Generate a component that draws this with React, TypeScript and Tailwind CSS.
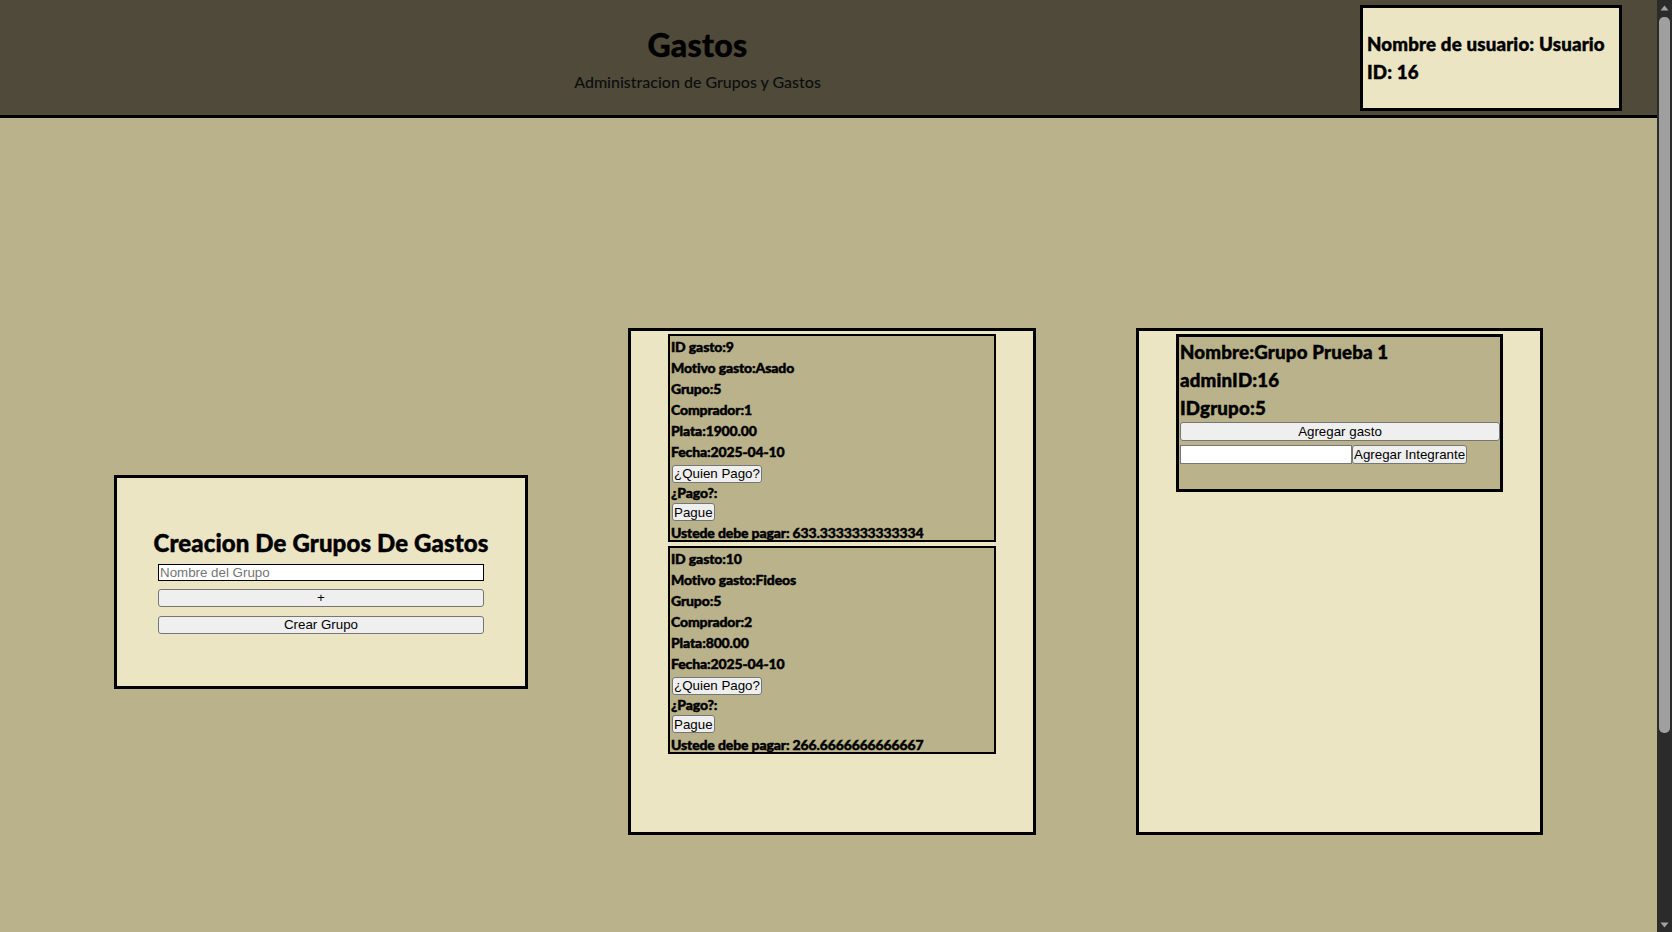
import React from "react";

const font = "font-['Lato','Noto_Sans',sans-serif]";
const heavy = "font-black [-webkit-text-stroke:0.45px_black]";
const btn =
  "font-['Liberation_Sans',Arial,sans-serif] font-normal tracking-normal [-webkit-text-stroke:0px] text-[13.33px] leading-[15px] text-black bg-[#efefef] border border-[#767676] rounded-[3px] px-[1px] flex items-center justify-center whitespace-nowrap";

type Gasto = {
  id: number;
  motivo: string;
  grupo: number;
  comprador: number;
  plata: string;
  fecha: string;
  debe: string;
};

const gastos: Gasto[] = [
  { id: 9, motivo: "Asado", grupo: 5, comprador: 1, plata: "1900.00", fecha: "2025-04-10", debe: "633.3333333333334" },
  { id: 10, motivo: "Fideos", grupo: 5, comprador: 2, plata: "800.00", fecha: "2025-04-10", debe: "266.6666666666667" },
];

function GastoCard({ g }: { g: Gasto }) {
  return (
    <div className={`w-[328px] h-[208px] shrink-0 border-2 border-black bg-[#b9b28b] flex flex-col text-[14px] leading-[21px] ${heavy} tracking-[-0.01em] text-black`}>
      <div className="pl-[1px] h-[21px] shrink-0">ID gasto:{g.id}</div>
      <div className="pl-[1px] h-[21px] shrink-0">Motivo gasto:{g.motivo}</div>
      <div className="pl-[1px] h-[21px] shrink-0">Grupo:{g.grupo}</div>
      <div className="pl-[1px] h-[21px] shrink-0">Comprador:{g.comprador}</div>
      <div className="pl-[1px] h-[21px] shrink-0">Plata:{g.plata}</div>
      <div className="pl-[1px] h-[21px] shrink-0">Fecha:{g.fecha}</div>
      <div className="flex h-[20px] shrink-0">
        <button className={`${btn} h-[18px] ml-[2px] mt-[2.5px]`}>¿Quien Pago?</button>
      </div>
      <div className="pl-[1px] h-[21px] shrink-0">¿Pago?:</div>
      <div className="flex h-[18.5px] shrink-0">
        <button className={`${btn} h-[18px] ml-[2px]`}>Pague</button>
      </div>
      <div className="pl-[1px] h-[21px] shrink-0 whitespace-nowrap">Ustede debe pagar: {g.debe}</div>
    </div>
  );
}

function Scrollbar() {
  return (
    <div className="w-[15px] h-full bg-[#2b2b2b] flex flex-col items-center shrink-0">
      <div className="h-[15px] w-full flex items-center justify-center">
        <svg width="9" height="6" viewBox="0 0 9 6">
          <path d="M4.5 0.5 L8.5 5.5 L0.5 5.5 Z" fill="#a3a3a3" />
        </svg>
      </div>
      <div className="flex-1 w-full px-[2px] pt-[2px]">
        <div className="h-[716px] w-full rounded-[5px] bg-[#9f9f9f]" />
      </div>
      <div className="h-[15px] w-full flex items-center justify-center">
        <svg width="9" height="6" viewBox="0 0 9 6">
          <path d="M0.5 0.5 L8.5 0.5 L4.5 5.5 Z" fill="#a3a3a3" />
        </svg>
      </div>
    </div>
  );
}

export default function App() {
  return (
    <div className="h-screen flex overflow-hidden bg-[#b9b28b]">
      <div className={`flex-1 h-full overflow-hidden ${font} text-black bg-[#b9b28b]`}>
        <div className="min-h-[1174px]">
          {/* Header */}
          <header className="h-[118px] bg-[#4f4a39] border-b-[3px] border-black flex items-center px-[35px]">
            <div className="flex-1 flex flex-col items-center">
              <h1 className={`text-[32px] leading-[48px] ${heavy} tracking-[0.01em] text-black`}>Gastos</h1>
              <p className="text-[16px] leading-[24px] mt-[1px] font-medium text-[#0d0d0d]">Administracion de Grupos y Gastos</p>
            </div>
            <div className={`w-[262px] h-[106px] border-[3px] border-black bg-[#ebe5c4] flex flex-col justify-center pl-[4px] ${heavy} tracking-[0.01em]`}>
              <h3 className="text-[18.72px] leading-[28px] whitespace-nowrap">Nombre de usuario: Usuario</h3>
              <h3 className="text-[18.72px] leading-[28px]">ID: 16</h3>
            </div>
          </header>

          {/* Main */}
          <main className="flex justify-center items-center gap-[100px] pt-[210px] pb-[339px]">
            {/* Create group */}
            <div className="w-[414px] h-[214px] border-[3px] border-black bg-[#ebe5c4] flex flex-col items-center pt-[47px]">
              <h2 className={`text-[24px] leading-[36px] ${heavy} tracking-[0.005em] whitespace-nowrap`}>Creacion De Grupos De Gastos</h2>
              <input
                className="mt-[3px] w-[326px] h-[17px] border border-black bg-white px-[1px] font-['Liberation_Sans',Arial,sans-serif] text-[13.33px] leading-[15px] text-black placeholder:text-[#757575] outline-none"
                placeholder="Nombre del Grupo"
              />
              <button className={`${btn} mt-[8px] w-[326px] h-[18px]`}>+</button>
              <button className={`${btn} mt-[9px] w-[326px] h-[18px]`}>Crear Grupo</button>
            </div>

            {/* Gastos list */}
            <div className="w-[408px] h-[507px] border-[3px] border-black bg-[#ebe5c4] flex flex-col items-center pt-[3px] gap-[4px]">
              {gastos.map((g) => (
                <GastoCard key={g.id} g={g} />
              ))}
            </div>

            {/* Group */}
            <div className="w-[407px] h-[507px] border-[3px] border-black bg-[#ebe5c4] flex flex-col items-center pt-[3px]">
              <div className={`w-[327px] h-[158px] border-[3px] border-black bg-[#b9b28b] flex flex-col pt-[1px] ${heavy} tracking-[0.01em]`}>
                <h3 className="text-[18.72px] leading-[28px] pl-[1px]">Nombre:Grupo Prueba 1</h3>
                <h3 className="text-[18.72px] leading-[28px] pl-[1px]">adminID:16</h3>
                <h3 className="text-[18.72px] leading-[28px] pl-[1px]">IDgrupo:5</h3>
                <button className={`${btn} ml-[1px] w-[320px] h-[19px]`}>Agregar gasto</button>
                <div className="flex mt-[4px] ml-[1px]">
                  <input className="w-[172px] h-[19px] border border-[#767676] bg-white outline-none" />
                  <button className={`${btn} h-[19px] rounded-[2px]`}>Agregar Integrante</button>
                </div>
              </div>
            </div>
          </main>
        </div>
      </div>
      <Scrollbar />
    </div>
  );
}
